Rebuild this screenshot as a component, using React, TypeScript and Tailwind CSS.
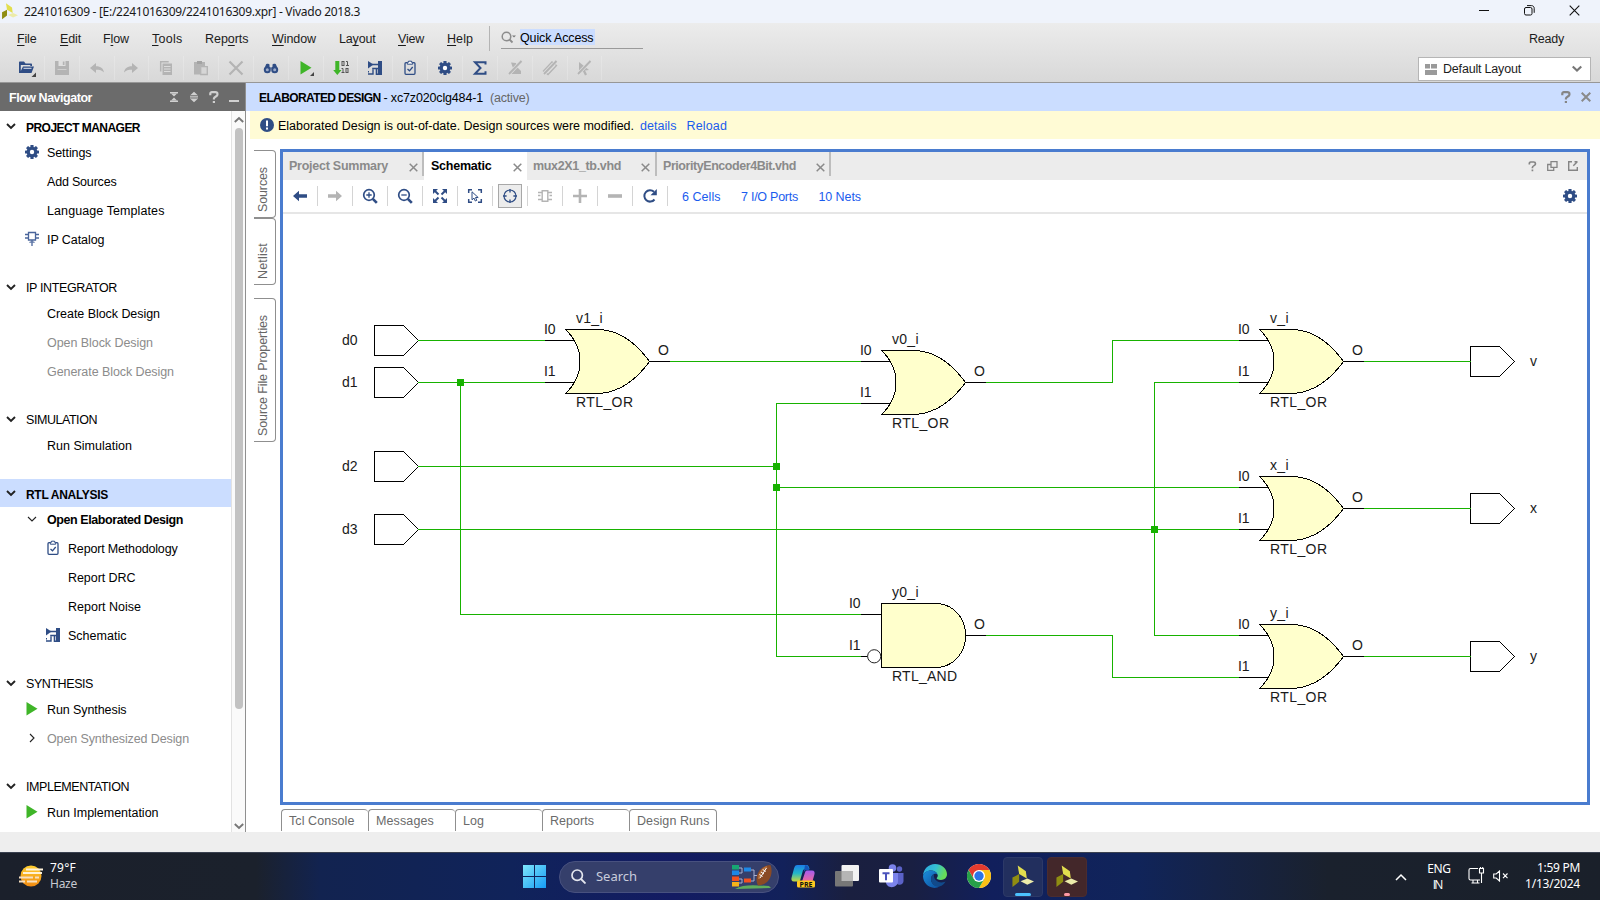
import { useLayoutEffect, useRef, type ReactNode } from "react";

const NAVY = "#2f4d85";
const GRAY = "#b4b4b4";

/** Single-line label whose tracking is spread so the text fills exactly `w` pixels. */
function Label({ w, flush = false, className = "", children }: { w: number; flush?: boolean; className?: string; children: ReactNode }) {
  const ref = useRef<HTMLSpanElement>(null);
  useLayoutEffect(() => {
    const el = ref.current;
    if (!el) return;
    el.style.letterSpacing = "0px";
    const box = el.getBoundingClientRect();
    const natural = Math.max(box.width, box.height);
    const count = (el.textContent ?? "").length;
    el.style.letterSpacing = `${(w - natural) / count}px`;
  }, [w]);
  return (
    <span className={"inline-block shrink-0 whitespace-pre " + (flush ? "" : "pt-0.5 ") + className} style={{ width: w }}>
      <span ref={ref} className="inline-block">{children}</span>
    </span>
  );
}

function Svg({ s = 16, w, h, className = "", children }: { s?: number; w?: number; h?: number; className?: string; children: ReactNode }) {
  return (
    <svg width={w ?? s} height={h ?? s} viewBox={`0 0 ${w ?? s} ${h ?? s}`} fill="none" className={"block shrink-0 " + className}>
      {children}
    </svg>
  );
}

/* ---------- icons ---------- */
const Gear = () => (
  <Svg>
    <g fill={NAVY}>
      <circle cx="8" cy="8" r="5.3" />
      {[0, 45, 90, 135].map((a) => (
        <rect key={a} x="6.4" y="1" width="3.2" height="14" rx=".6" transform={`rotate(${a} 8 8)`} />
      ))}
    </g>
    <circle cx="8" cy="8" r="2.2" fill="#fff" />
  </Svg>
);
const Chip = () => (
  <Svg>
    <path d="M4.500 1.500h7v7.500h-7zM1 3.500h3.500M1 7h3.500M11.500 3.500H15M11.500 7H15M8 9v6M5.500 11.500l2.500-1 2.500 1" stroke="#4a659b" strokeWidth="1.300" />
  </Svg>
);
const Clipboard = () => (
  <Svg>
    <rect x="3" y="2.700" width="10" height="11.600" rx="1" stroke={NAVY} strokeWidth="1.300" />
    <path d="M6.500 1.200h3v1h1.200v2H5.300v-2h1.200z" fill="#fff" stroke={NAVY} strokeWidth="1" />
    <path d="M5.500 9l2 1.800 3.200-3.800" stroke={NAVY} strokeWidth="1.300" />
  </Svg>
);
const SchematicIcon = () => (
  <Svg>
    <path d="M1 1l5.500 3.500L1 8.500z" fill={NAVY} />
    <path d="M5 4.500h6M1 14H6V9.500" stroke={NAVY} strokeWidth="1.400" />
    <path d="M6 9.500v-1h5M9.500 8.500V14.300H11" stroke={NAVY} strokeWidth="1.600" />
    <path d="M11 1h4v14h-4z" fill={NAVY} />
    <path d="M1.500 11v1.500" stroke={NAVY} strokeWidth="1" />
  </Svg>
);
const Play = ({ menu = false }: { menu?: boolean }) => (
  <Svg>
    <path d="M2.500 1L13.500 7.800l-11 6.800z" fill="#3fb528" />
    {menu && <path d="M16 16v-4l-4 4z" fill="#444" />}
  </Svg>
);
const Chevron = ({ thin = false, right = false }: { thin?: boolean; right?: boolean }) => (
  <Svg w={10} h={10}>
    <path d={right ? "M3 1l4 4-4 4" : "M1 3l4 4 4-4"} stroke="#222" strokeWidth={thin ? 1.100 : 1.900} />
  </Svg>
);
const OpenFolder = () => (
  <Svg w={18} h={18}>
    <path d="M1 14V3.500c0-.6.4-1 1-1h4l1.500 2H13c.6 0 1 .4 1 1V7h-1.700V6H2.800v6L5 7.500h11L13.500 14z" fill={NAVY} fillRule="evenodd" />
    <path d="M5.500 9.300h8" stroke="#dfe3ea" strokeWidth="1" />
    <path d="M18 18v-4.500L13.500 18z" fill="#444" />
  </Svg>
);
const Save = () => (
  <Svg>
    <path d="M1 1h14v14H1z" fill={GRAY} />
    <path d="M4.500 1h7v5h-7z" fill="#e0e0e0" />
    <path d="M8.800 1.500h1.700v3.500H8.800z" fill={GRAY} />
    <path d="M3.500 9.500h9" stroke="#cfcfcf" />
  </Svg>
);
const Undo = ({ flip = false }: { flip?: boolean }) => (
  <Svg className={flip ? "-scale-x-100" : ""}>
    <path d="M1 8l6-5v3.200c5 0 7.500 2.300 8 6.300-1.800-2.300-4.300-2.800-8-2.800V13z" fill={GRAY} />
  </Svg>
);
const Copy = () => (
  <Svg>
    <path d="M2.700 11.500V1.700h8" stroke={GRAY} strokeWidth="1.500" />
    <path d="M4.500 3.500H14V15H4.500z" fill={GRAY} />
    <path d="M6 6.500h6.500M6 9h6.500M6 11.500h6.500" stroke="#dcdcdc" />
  </Svg>
);
const Paste = () => (
  <Svg>
    <path d="M1 2h11v4H7v8.500H1z" fill={GRAY} />
    <path d="M4 1h5v3H4z" fill="#a3a3a3" />
    <path d="M7.700 6.700h6.600v7.800H7.700z" fill="#d6d6d6" stroke={GRAY} strokeWidth="1.300" />
  </Svg>
);
const Delete = () => (
  <Svg>
    <path d="M1.500 1.500l13 13M14.500 1.500l-13 13" stroke={GRAY} strokeWidth="2.200" />
  </Svg>
);
const Binoculars = () => (
  <Svg>
    <path d="M3 4.500c0-1 3-1 3.500 0v3h3v-3c.5-1 3.500-1 3.500 0l1.500 4h-13z" fill={NAVY} />
    <circle cx="4.300" cy="9.700" r="3.500" fill={NAVY} />
    <circle cx="11.700" cy="9.700" r="3.500" fill={NAVY} />
    <circle cx="4.300" cy="9.700" r="1.500" fill="#9eacc9" />
    <circle cx="11.700" cy="9.700" r="1.500" fill="#9eacc9" />
  </Svg>
);
const Bitstream = () => (
  <Svg w={16} h={16}>
    <path d="M2.300 1h4v9h2.200L4.300 15 .2 10h2.100z" fill="#3fb528" />
    <g stroke="#555" strokeWidth="1">
      <rect x="9" y="1.500" width="2" height="4" />
      <path d="M13 1.500h1.500v4M13 5.500h3M8.500 8.500h1.500v4M8.500 12.500h3" />
      <rect x="13" y="8.500" width="2" height="4" />
    </g>
  </Svg>
);
const Sigma = () => (
  <Svg>
    <path d="M13.500 4.500V2.200H3L8.500 8 3 13.800h10.500v-2.500" stroke={NAVY} strokeWidth="2" />
  </Svg>
);
const Disabled = ({ kind }: { kind: 0 | 1 | 2 }) => (
  <Svg>
    {kind === 0 && <path d="M4 2.500l5 .5 1 4 4 4v3H2v-2l4-4z" fill={GRAY} />}
    {kind === 1 && <path d="M1.500 11l8.500-9 4.500 3.500-8.500 9zM4 11.500l7-7.500" stroke={GRAY} strokeWidth="1.300" />}
    {kind === 2 && <path d="M3 2l10 8-4 .5 2 4-2 1-2-4-4 2.500z" fill={GRAY} />}
    <path d="M14.500 1L2 14" stroke="#dedede" strokeWidth="3.400" />
    <path d="M14.500 1L2 14" stroke={GRAY} strokeWidth="1.900" />
  </Svg>
);
const Arrow = ({ right = false }: { right?: boolean }) => (
  <Svg className={right ? "-scale-x-100" : ""}>
    <path d="M1 8l6-5.200v3.400h8v3.600H7v3.400z" fill={right ? GRAY : NAVY} />
  </Svg>
);
const Zoom = ({ plus = false }: { plus?: boolean }) => (
  <Svg>
    <circle cx="7" cy="7" r="5.300" stroke={NAVY} strokeWidth="1.700" />
    <path d="M10.800 10.800l4 4" stroke={NAVY} strokeWidth="2.600" />
    <path d={plus ? "M4.300 7h5.400M7 4.300v5.400" : "M4.300 7h5.400"} stroke={NAVY} strokeWidth="1.300" />
  </Svg>
);
const Fit = () => (
  <Svg>
    {[0, 90, 180, 270].map((a) => (
      <g key={a} transform={`rotate(${a} 8 8)`}>
        <path d="M1 1h5L1 6z" fill={NAVY} />
        <path d="M2.500 2.500l4 4" stroke={NAVY} strokeWidth="2" />
      </g>
    ))}
  </Svg>
);
const SelectArea = () => (
  <Svg>
    <path d="M1.700 5V1.700H5M11 1.700h3.300V5M14.300 11v3.300H11M5 14.300H1.700V11" stroke={NAVY} strokeWidth="1.500" />
    <path d="M5 3.800v8l2-1.700 1.300 2.900 1.500-.7-1.300-2.800h2.700z" stroke={NAVY} strokeWidth="1" fill="#fff" />
  </Svg>
);
const Target = () => (
  <Svg>
    <circle cx="8" cy="8" r="6" stroke={NAVY} strokeWidth="1.200" />
    <path d="M8 1v3.600M8 11.400V15M1 8h3.600M11.400 8H15" stroke={NAVY} strokeWidth="1.400" />
  </Svg>
);
const Cell = () => (
  <Svg>
    <path d="M5.200 2.700h5.600v10.600H5.200z" stroke={GRAY} strokeWidth="1.400" />
    <path d="M1 4.500h4M1 7.500h2.500M1 11.500h4M11 4.500h4M12.500 7.500H15M11 11.500h4" stroke={GRAY} strokeWidth="1.400" />
  </Svg>
);
const Plus = () => (
  <Svg>
    <path d="M8 1v14M1 8h14" stroke={GRAY} strokeWidth="2.600" />
  </Svg>
);
const Minus = () => (
  <Svg>
    <path d="M1 8h14" stroke={GRAY} strokeWidth="3.600" />
  </Svg>
);
const Reload = () => (
  <Svg>
    <path d="M12.500 11.500A5.700 5.700 0 1 1 12 3.800" stroke={NAVY} strokeWidth="2" />
    <path d="M14.800 1v6.300H8.500z" fill={NAVY} />
  </Svg>
);
const CloseX = ({ s = 9, c = "#8a8a8a", sw = 1.500 }: { s?: number; c?: string; sw?: number }) => (
  <Svg s={s}>
    <path d={`M.7 .7L${s - 0.700} ${s - 0.700}M${s - 0.700} .7L.7 ${s - 0.700}`} stroke={c} strokeWidth={sw} />
  </Svg>
);
const Question = ({ c }: { c: string }) => (
  <Svg w={10} h={13}>
    <path d="M1.300 4.200V2.600C1.300 1.600 2 1.200 2.800 1.200h3.600c1 0 2 .5 2 1.600v1c0 1.700-3.500 1.700-3.500 3.900v.8M4.900 10v2" stroke={c} strokeWidth="2.200" />
  </Svg>
);
const VivadoMark = ({ s = 24 }: { s?: number }) => (
  <svg width={s} height={s} viewBox="0 0 24 24" className="block shrink-0">
    <path d="M7 0.500l8.500 6L16.500 14 8.500 9.500z" fill="#e2de4e" />
    <path d="M1.500 13L8.500 9.500v8L1.500 23z" fill="#8f8d12" />
    <path d="M10 17l7-2.800 7 3-7 3.300z" fill="#ecebaa" />
  </svg>
);

/* ---------- title, menu and tool bars ---------- */
function TitleBar() {
  return (
    <div className="flex h-[23px] items-center bg-[#eff3fb] pl-px pr-5 font-['Noto_Sans',sans-serif] text-[12px] text-[#191919]">
      <VivadoMark s={17} />
      <Label flush w={336} className="ml-[6px] leading-[23px]">2241016309 - [E:/2241016309/2241016309.xpr] - Vivado 2018.3</Label>
      <div className="ml-auto flex items-center pb-[3px]">
        <Svg w={10} h={11}><path d="M0 5.500h10" stroke="#111" /></Svg>
        <Svg w={11} h={11} className="ml-[35px]">
          <rect x=".5" y="2.500" width="7.500" height="7.500" rx="1.500" stroke="#111" />
          <path d="M3 .6h4.500c1.500 0 2.700 1.100 2.700 2.700v4.500" stroke="#111" />
        </Svg>
        <div className="ml-[34px]"><CloseX s={11} c="#111" sw={1.100} /></div>
      </div>
    </div>
  );
}

const MENUS: [string, string, string, number, number][] = [
  ["", "F", "ile", 19.500, 43],
  ["", "E", "dit", 21, 43],
  ["F", "l", "ow", 26, 49],
  ["", "T", "ools", 30.500, 53],
  ["Rep", "o", "rts", 43.500, 67],
  ["", "W", "indow", 44, 67],
  ["La", "y", "out", 36.500, 59],
  ["", "V", "iew", 26, 49],
  ["", "H", "elp", 26, 42],
];

function MenuBar() {
  return (
    <div className="flex h-[33px] items-start text-[12.500px] text-[#1c1c1c]">
      <div className="flex h-[31px] items-center pl-[17px]">
        {MENUS.map(([a, u, b, w, step]) => (
          <div key={u + b} className="shrink-0" style={{ width: step }}>
            <Label w={w}>{a}<span className="underline underline-offset-2">{u}</span>{b}</Label>
          </div>
        ))}
      </div>
      <div className="mt-[3px] h-[25px] w-px bg-[#b4b4b4]" />
      <div className="ml-[11px] flex h-[26px] w-[142px] items-center border-b border-[#9a9a9a] pt-[3px]">
        <Svg w={15} h={13}>
          <circle cx="5.500" cy="5.500" r="4.300" stroke="#8c8c8c" strokeWidth="1.500" />
          <path d="M8.500 8.500l3 3" stroke="#8c8c8c" strokeWidth="1.800" />
          <path d="M11 4.500h4l-2 2z" fill="#777" />
        </Svg>
        <div className="ml-1 flex h-4 w-[75px] items-center bg-[#cbddff] text-black"><Label w={73.500}>Quick Access</Label></div>
      </div>
      <div className="ml-auto flex h-[31px] items-center pr-9"><Label w={35}>Ready</Label></div>
    </div>
  );
}

const MAIN_TOOLS: ReactNode[] = [
  <OpenFolder />, <Save />, <Undo />, <Undo flip />, <Copy />, <Paste />, <Delete />, <Binoculars />, <Play menu />,
  <Bitstream />, <SchematicIcon />, <Clipboard />, <Gear />, <Sigma />, <Disabled kind={0} />, <Disabled kind={1} />, <Disabled kind={2} />,
];

function ToolBar() {
  return (
    <div className="flex h-[26px] items-center justify-between pl-[10px] pr-[9px]">
      <div className="flex pb-0.5">
        {MAIN_TOOLS.map((icon, i) => (
          <div key={i} className="flex h-6 w-[34.850px] items-center justify-center border-r border-white/20">{icon}</div>
        ))}
      </div>
      <div className="flex h-6 w-[173px] items-center border border-[#b5b5b5] bg-white pl-1.5 pr-2 text-[12.500px] text-[#1c1c1c]">
        <Svg w={12} h={11}>
          <path d="M0 0h5v4.500H0zM6 0h6v4.500H6zM0 6h12v5H0z" fill="#9a9a9a" />
        </Svg>
        <Label flush w={78} className="ml-1.5">Default Layout</Label>
        <Svg w={10} h={8} className="ml-auto"><path d="M.7 1.500L5 5.500l4.300-4" stroke="#777" strokeWidth="2.200" /></Svg>
      </div>
    </div>
  );
}

/* ---------- flow navigator ---------- */
type Item = { text: string; w: number; icon?: ReactNode; dim?: boolean; bold?: boolean; deep?: boolean };
type Section = { title: string; w: number; active?: boolean; bold?: boolean; items: Item[] };

const SECTIONS: Section[] = [
  {
    title: "PROJECT MANAGER", w: 114, bold: true,
    items: [
      { text: "Settings", w: 44.500, icon: <Gear /> },
      { text: "Add Sources", w: 69.500 },
      { text: "Language Templates", w: 117.500 },
      { text: "IP Catalog", w: 57.500, icon: <Chip /> },
    ],
  },
  {
    title: "IP INTEGRATOR", w: 91,
    items: [
      { text: "Create Block Design", w: 113 },
      { text: "Open Block Design", w: 106, dim: true },
      { text: "Generate Block Design", w: 127, dim: true },
    ],
  },
  { title: "SIMULATION", w: 71, items: [{ text: "Run Simulation", w: 85 }] },
  {
    title: "RTL ANALYSIS", w: 82, active: true, bold: true,
    items: [
      { text: "Open Elaborated Design", w: 136, bold: true, icon: <Chevron thin /> },
      { text: "Report Methodology", w: 109.500, icon: <Clipboard />, deep: true },
      { text: "Report DRC", w: 67.500, deep: true },
      { text: "Report Noise", w: 73, deep: true },
      { text: "Schematic", w: 58.500, icon: <SchematicIcon />, deep: true },
    ],
  },
  {
    title: "SYNTHESIS", w: 67,
    items: [
      { text: "Run Synthesis", w: 79.500, icon: <Play /> },
      { text: "Open Synthesized Design", w: 142, dim: true, icon: <Chevron thin right /> },
    ],
  },
  { title: "IMPLEMENTATION", w: 103, items: [{ text: "Run Implementation", w: 111.500, icon: <Play /> }] },
];

function FlowNavigator() {
  return (
    <aside className="flex w-[246px] shrink-0 flex-col border-r border-[#8f8f8f] bg-white">
      <div className="flex h-7 shrink-0 items-center bg-[#6b6b6b] pl-[9px] text-[12.500px] font-bold text-white">
        <Label w={83}>Flow Navigator</Label>
        <div className="ml-auto flex items-center gap-[10px] pr-1.5">
          <Svg w={10} h={12}><path d="M1 1.800h8M1 10.200h8" stroke="#d0d0d0" strokeWidth="1.400" /><path d="M2 2.500h6L5 5.500zM2 9.500h6L5 6.500z" fill="#d0d0d0" /></Svg>
          <Svg w={10} h={12}><path d="M1.500 4L5 .8 8.500 4zM1.500 8L5 11.200 8.500 8z" fill="#d0d0d0" /><path d="M1 5.200h8M1 7h8" stroke="#d0d0d0" strokeWidth="1.100" /></Svg>
          <Question c="#d0d0d0" />
          <Svg w={10} h={12}><path d="M0 10h10" stroke="#d0d0d0" strokeWidth="2" /></Svg>
        </div>
      </div>
      <div className="flex min-h-0 flex-1">
        <div className="min-w-0 flex-1 overflow-hidden pt-px text-[12.500px]">
          {SECTIONS.map((s) => (
            <section key={s.title} className="mb-[19px]">
              <div className={"flex h-7 items-center pl-[6px] " + (s.active ? "bg-[#cbddff]" : "")}>
                <Chevron />
                <Label w={s.w} className={"ml-[10px] pt-[3px] " + (s.bold ? "text-[12px] font-bold" : "")}>{s.title}</Label>
              </div>
              <div className="-mt-0.5">
                {s.items.map((it) => (
                  <div key={it.text} className={"flex h-[29px] items-center " + (it.deep ? "pl-[46px] " : "pl-[25px] ") + (it.dim ? "text-[#8c8c8c] " : "text-black ") + (it.bold ? "font-bold" : "")}>
                    <div className="-ml-px mr-px flex w-4 justify-center pb-px">{it.icon}</div>
                    <Label w={it.w} className="ml-1.5">{it.text}</Label>
                  </div>
                ))}
              </div>
            </section>
          ))}
        </div>
        <div className="flex w-[14px] flex-col items-center border-l border-[#e2e2e2] bg-[#fafafa] py-[5px]">
          <Svg w={10} h={7}><path d="M.8 6L5 2l4.200 4" stroke="#777" strokeWidth="1.900" /></Svg>
          <div className="mt-[5px] h-[581px] w-2 rounded bg-[#c2c2c2]" />
          <Svg w={10} h={7} className="mt-auto -mb-[3px]"><path d="M.8 1L5 5l4.200-4" stroke="#777" strokeWidth="1.900" /></Svg>
        </div>
      </div>
    </aside>
  );
}

/* ---------- schematic ---------- */
function Txt({ x, y, w, children }: { x: number; y: number; w: number; children: string }) {
  return (
    <text x={x} y={y} textLength={w} className="fill-[#1a1a1a] font-['Liberation_Sans',Arial,sans-serif] text-[14px]">
      {children}
    </text>
  );
}

function PortShape({ x, y }: { x: number; y: number }) {
  return <path d={`M${x + 0.500} ${y - 14.500}h29l15 15-15 15h-29z`} fill="#fff" stroke="#000" />;
}

function OrGate({ x, y, name, nameW }: { x: number; y: number; name: string; nameW: number }) {
  const c = y + 0.500;
  return (
    <g>
      <path d={`M${x - 20} ${c - 21}h31M${x - 20} ${c + 21}h31M${x + 84} ${c}h21`} stroke="#000" />
      <path
        d={`M${x + 0.500} ${c - 32}H${x + 36}C${x + 58} ${c - 30} ${x + 73} ${c - 16} ${x + 84.500} ${c}C${x + 73} ${c + 16} ${x + 58} ${c + 30} ${x + 35} ${c + 32}H${x + 0.500}C${x + 11} ${c + 22} ${x + 15} ${c + 12} ${x + 15} ${c}C${x + 15} ${c - 12} ${x + 11} ${c - 22} ${x + 0.500} ${c - 32}z`}
        fill="#ffffcc"
        stroke="#000"
      />
      <Txt x={x + 11} y={y - 38} w={nameW}>{name}</Txt>
      <Txt x={x + 11} y={y + 46} w={57}>RTL_OR</Txt>
      <Txt x={x - 21} y={y - 27} w={11.500}>I0</Txt>
      <Txt x={x - 21} y={y + 15} w={11.500}>I1</Txt>
      <Txt x={x + 93} y={y - 6} w={11}>O</Txt>
    </g>
  );
}

function Schematic() {
  const ins: [string, number][] = [["d0", 340], ["d1", 382], ["d2", 466], ["d3", 529]];
  const outs: [string, number][] = [["v", 361], ["x", 508], ["y", 656]];
  const dots: [number, number][] = [[460, 382], [776, 466], [776, 487], [1154, 529]];
  return (
    <svg width="1304" height="588" viewBox="283 214 1304 588" fill="none" shapeRendering="crispEdges" className="block">
      {ins.map(([n, y]) => (
        <g key={n}>
          <PortShape x={374} y={y} />
          <Txt x={342} y={y + 5} w={15.500}>{n}</Txt>
        </g>
      ))}
      {outs.map(([n, y]) => (
        <g key={n}>
          <PortShape x={1470} y={y} />
          <Txt x={1530} y={y + 5} w={7}>{n}</Txt>
        </g>
      ))}
      <path
        d="M418 340.500H545M418 382.500H545M460.500 382V614.500H861M670 361.500H861M418 466.500H776.500M861 403.500H776.500V656.500H861M776 487.500H1239M418 529.500H1239M1239 382.500H1154.500V635.500H1239M986 382.500H1112.500V340.500H1239M986 635.500H1112.500V677.500H1239M1364 361.500H1471M1364 508.500H1471M1364 656.500H1471"
        stroke="#17b200"
      />
      {dots.map(([x, y]) => (
        <rect key={`${x}-${y}`} x={x - 3} y={y - 3} width="7" height="7" fill="#17b200" />
      ))}
      <OrGate x={565} y={361} name="v1_i" nameW={26.500} />
      <OrGate x={881} y={382} name="v0_i" nameW={26.500} />
      <OrGate x={1259} y={361} name="v_i" nameW={18.500} />
      <OrGate x={1259} y={508} name="x_i" nameW={18.500} />
      <OrGate x={1259} y={656} name="y_i" nameW={18.500} />
      <path d="M861 614.500h21M861 656.500h7M965 635.500h21" stroke="#000" />
      <path d="M881.500 603.500H938C954 605 965.500 618 965.500 635.500C965.500 653 954 666 938 667.500H881.500z" fill="#ffffcc" stroke="#000" />
      <circle cx="874.200" cy="656.300" r="6.600" fill="#fff" stroke="#222" shapeRendering="geometricPrecision" />
      <Txt x={892} y={597} w={26.500}>y0_i</Txt>
      <Txt x={892} y={681} w={65}>RTL_AND</Txt>
      <Txt x={849} y={608} w={11.500}>I0</Txt>
      <Txt x={849} y={650} w={11.500}>I1</Txt>
      <Txt x={974} y={629} w={11}>O</Txt>
    </svg>
  );
}

const VIEW_TOOLS: ReactNode[] = [
  <Arrow />, <Arrow right />, <Zoom plus />, <Zoom />, <Fit />, <SelectArea />, <Target />, <Cell />, <Plus />, <Minus />, <Reload />,
];

function EditorPane() {
  return (
    <div className="flex h-[656px] w-[1310px] flex-col border-[3px] border-[#4a7ccf] bg-white">
      <div className="flex h-7 shrink-0 items-center bg-[#ececec] pr-[13px] text-[12.500px] font-bold text-[#8a8a8a]">
        <div className="flex h-full w-[141px] items-center pl-1.5 pr-[5px]">
          <Label flush w={99}>Project Summary</Label>
          <div className="ml-auto mt-0.5"><CloseX /></div>
          <div className="-mr-[5px] ml-1 mb-1 h-6 w-0.5 bg-[#bdbdbd]" />
        </div>
        <div className="flex h-full w-[103px] items-center bg-white pl-[7px] text-black">
          <Label flush w={60.500}>Schematic</Label>
          <div className="ml-auto mr-[5px] mt-0.5"><CloseX /></div>
        </div>
        <div className="flex h-full w-[130px] items-center pl-1.5">
          <Label flush w={88}>mux2X1_tb.vhd</Label>
          <div className="ml-auto mt-0.5"><CloseX /></div>
          <div className="ml-[5px] mb-1 h-6 w-0.5 bg-[#bdbdbd]" />
        </div>
        <div className="flex h-full w-[174px] items-center pl-1.5">
          <Label flush w={133}>PriorityEncoder4Bit.vhd</Label>
          <div className="ml-auto mt-0.5"><CloseX /></div>
          <div className="ml-1 mb-1 h-6 w-0.5 bg-[#bdbdbd]" />
        </div>
        <div className="-mr-[4px] ml-auto flex items-center gap-2.5">
          <svg width="9" height="11" viewBox="0 0 10 13" className="block" fill="none"><path d="M1.300 4.200V2.600C1.300 1.600 2 1.200 2.800 1.200h3.600c1 0 2 .5 2 1.600v1c0 1.700-3.500 1.700-3.500 3.900v.8M4.900 10v2" stroke="#858585" strokeWidth="2" /></svg>
          <Svg w={11} h={10}><path d="M4 .7h6v5.600H4zM4 3.500H.7v5.800h6V6.500" stroke="#858585" strokeWidth="1.300" /></Svg>
          <Svg w={10} h={10}><path d="M4 .7H.7v8.600h8.600V6M6.500 .8h3M9.300 .7l-4 4" stroke="#858585" strokeWidth="1.400" /></Svg>
        </div>
      </div>
      <div className="flex h-[34px] shrink-0 items-center border-b-2 border-[#e6e6e6] pr-[9px]">
        {VIEW_TOOLS.map((icon, i) => (
          <div key={i} className="flex h-5 w-[35px] items-center justify-center border-r border-[#d4d4d4]">
            {i === 6 ? <div className="flex h-6 w-6 shrink-0 items-center justify-center border border-[#a8a8a8] bg-[#ececec]">{icon}</div> : icon}
          </div>
        ))}
        <div className="flex items-center gap-[20.500px] pl-3.5 text-[12.500px] text-[#1a5cee]">
          <Label w={38.500}>6 Cells</Label>
          <Label w={57}>7 I/O Ports</Label>
          <Label w={42.500}>10 Nets</Label>
        </div>
        <div className="ml-auto"><Gear /></div>
      </div>
      <Schematic />
    </div>
  );
}

function SideTab({ text, w, className }: { text: string; w: number; className: string }) {
  return (
    <div className={"flex w-[22px] shrink-0 items-end justify-center rounded-r border border-l-0 border-[#8f8f8f] pr-1 text-[12.500px] text-[#666] " + className}>
      <div className="flex w-4 items-end" style={{ height: w }}>
        <Label flush w={w} className="h-4 origin-top-left translate-y-full -rotate-90 leading-4">{text}</Label>
      </div>
    </div>
  );
}

const BOTTOM_TABS: [string, number][] = [["Tcl Console", 65.500], ["Messages", 58], ["Log", 21], ["Reports", 44], ["Design Runs", 72.500]];

function Workspace() {
  return (
    <main className="flex min-w-0 flex-1 flex-col bg-white">
      <div className="flex h-7 shrink-0 items-center bg-[#cbddff] pl-[13px] pr-[9px] text-[12.500px] text-black">
        <Label w={121.500} className="text-[12px] font-bold">ELABORATED DESIGN</Label>
        <Label w={99.500} className="ml-[3px]">- xc7z020clg484-1</Label>
        <Label w={39.500} className="ml-[7px] text-[#666]">(active)</Label>
        <div className="ml-auto flex items-center gap-[10px]">
          <Question c="#858585" />
          <CloseX s={10} sw={2} />
        </div>
      </div>
      <div className="ml-1 flex h-7 shrink-0 items-center bg-[#fffbd5] pl-[10px] text-[12.500px] text-black">
        <Svg s={14}><circle cx="7" cy="7" r="7" fill={NAVY} /><path d="M7 2.500v5.700M7 9.500v2" stroke="#fff" strokeWidth="2" /></Svg>
        <Label w={356} className="ml-1">Elaborated Design is out-of-date. Design sources were modified.</Label>
        <Label w={36.500} className="ml-1.5 text-[#1a5cee]">details</Label>
        <Label w={40.500} className="ml-2.5 text-[#1a5cee]">Reload</Label>
      </div>
      <div className="flex pl-2 pt-[10px]">
        <div className="flex w-[26px] flex-col pt-px">
          <SideTab text="Sources" w={45} className="h-[68px] pb-[5px]" />
          <SideTab text="Netlist" w={36} className="h-[67px] pb-[5px]" />
          <SideTab text="Source File Properties" w={121} className="mt-[13px] h-[144px] pb-[5px]" />
        </div>
        <EditorPane />
      </div>
      <div className="ml-[35px] mt-1 flex h-[22px] text-[12.500px] text-[#6a6a6a]">
        {BOTTOM_TABS.map(([t, w], i) => (
          <div key={t} className={"flex shrink-0 items-center rounded-t border-l border-t border-[#8f8f8f] pl-[7px] " + (i === 4 ? "w-[88px] border-r" : "w-[87px]")}>
            <Label w={w}>{t}</Label>
          </div>
        ))}
      </div>
    </main>
  );
}

/* ---------- taskbar ---------- */
const Weather = () => (
  <svg width="26" height="24" viewBox="0 0 26 24" className="block">
    <defs><linearGradient id="sun" x1="0" y1="0" x2="0" y2="1"><stop offset="0" stopColor="#ffcf2e" /><stop offset="1" stopColor="#f08a12" /></linearGradient></defs>
    <circle cx="13" cy="12" r="10.500" fill="url(#sun)" />
    <path d="M8 5.500h17M5 9h19" stroke="#fff2d8" strokeWidth="1.800" />
    <path d="M1 13.500h14M17 13.500h4M1 17.500h6M9 17.500h10" stroke="#f7dfc0" strokeWidth="1.800" />
  </svg>
);
const SearchArt = () => (
  <svg width="42" height="26" viewBox="0 0 42 26" className="block" fill="none">
    <path d="M4 25c8-5 20-4 34-3l2 2z" fill="#5fae5c" />
    <path d="M8 4h3v5H8M8 15h3v4H8M19 6h4v11h-4M23 11.500h5" stroke="#a9b0d0" />
    <rect x="1" y="1" width="7" height="4.500" fill="#17a673" />
    <rect x="1" y="6.500" width="7" height="4.500" fill="#1e88e5" />
    <rect x="1" y="12.500" width="7" height="4.500" fill="#f4511e" />
    <rect x="1" y="18" width="7" height="4.500" fill="#f5b21a" />
    <rect x="13" y="3.500" width="7" height="4" fill="#1e88e5" />
    <rect x="13" y="14.500" width="7" height="4" fill="#f4511e" />
    <path d="M27 21.500C23 14 27 2 39.500 1 43 10 38 21 27 21.500z" fill="#8a4a25" />
    <path d="M28 15c0-5 3-10 8-12" stroke="#b5713f" strokeWidth="2" />
    <path d="M29 14l6.500-10M28.500 10.500l3 2M30 8l3 2M31.700 5.500l3 2" stroke="#fff" strokeWidth="1" />
  </svg>
);
const Copilot = () => (
  <svg width="24" height="24" viewBox="0 0 24 24" className="block">
    <defs>
      <linearGradient id="cpa" x1="0" y1="0" x2="0" y2="1"><stop offset="0" stopColor="#1c7fe8" /><stop offset=".5" stopColor="#22b6c8" /><stop offset="1" stopColor="#c9d83a" /></linearGradient>
      <linearGradient id="cpb" x1="0" y1="0" x2="0" y2="1"><stop offset="0" stopColor="#a45cf0" /><stop offset="1" stopColor="#f0689a" /></linearGradient>
    </defs>
    <path d="M6.500 1h9c2 0 2.500 2 3 4h-4c-2 0-2.500 1-3 3l-2 7c-.5 2-1 2.500-3 2.500H3c-2.500 0-3-2-2.400-4L3 4.500C3.700 2 4.500 1 6.500 1z" fill="url(#cpa)" />
    <path d="M14 1.300c3 0 3.500 2 4.500 5h-4.300l-1.500 2z" fill="#1454b8" />
    <path d="M16 6.500h5c2.500 0 3 2 2.400 4l-2 7H11l3-9c.4-1.300 1-2 2-2z" fill="url(#cpb)" />
    <rect x="6" y="16.500" width="18" height="7" rx="1.500" fill="#ffc91f" />
    <text x="8.500" y="22.500" className="fill-[#111] font-['Open_Sans',sans-serif] text-[7px] font-bold" textLength="13">PRE</text>
  </svg>
);
const TaskView = () => (
  <svg width="24" height="24" viewBox="0 0 24 24" className="block">
    <rect x="6.500" y="1" width="17.500" height="16" rx="1" fill="#f2f2f2" />
    <rect x="0" y="7" width="18" height="15.500" rx="1" fill="#777" />
    <path d="M6.500 7H18v10H6.500z" fill="#b5b5b5" />
  </svg>
);
const Teams = () => (
  <svg width="25" height="24" viewBox="0 0 25 24" className="block">
    <circle cx="20.500" cy="5" r="2.700" fill="#5b62c8" /><circle cx="13.500" cy="4" r="3.800" fill="#7b83eb" />
    <path d="M17 9h7.500v8c0 4-5 5-7.500 2z" fill="#5b62c8" />
    <path d="M7 9h12v8c0 8-12 8-12 1z" fill="#7b83eb" />
    <rect x="0" y="5" width="14" height="13.500" rx="1" fill="#fff" />
    <path d="M3.500 8.300h7v2H8v6H6v-6H3.500z" fill="#4b53bc" />
  </svg>
);
const Edge = () => (
  <svg width="24" height="24" viewBox="0 0 24 24" className="block">
    <defs>
      <linearGradient id="ega" x1="0" y1="0" x2="1" y2=".3"><stop offset="0" stopColor="#2aa5e0" /><stop offset=".55" stopColor="#35c1d4" /><stop offset="1" stopColor="#66dd58" /></linearGradient>
      <linearGradient id="egb" x1="0" y1="0" x2="1" y2="1"><stop offset="0" stopColor="#1b8fdc" /><stop offset="1" stopColor="#0c4d9c" /></linearGradient>
    </defs>
    <path d="M0 11.500C.5 5 5.500 0 12 0s12 4.500 12 10.300c0 3.400-2.700 5.700-6 5.700-3 0-4.500-1.200-4.300-2 1-.8 1.200-2 1-3C14 8 11 6.500 8 6.500c-4 0-7 2.500-8 5z" fill="url(#ega)" />
    <path d="M0 12c.8-3.500 4-5.500 8-5.500 3 0 5.500 1.500 6.500 3.800C12 8.500 8 11 8 15c0 4.500 4 8 9 7-1.500 1.300-3.500 2-5.500 2C5 23.500 0 18.500 0 12z" fill="url(#egb)" />
    <path d="M8 15c0-3 1.500-4.500 3-5-1 4 2.500 8.500 7.500 8.500 2 0 3.500-.7 4.200-1.200C21 20 19 22 17 22.300 12 23.500 8 19.500 8 15z" fill="#114a8b" />
  </svg>
);
const Chrome = () => (
  <svg width="24" height="24" viewBox="0 0 24 24" className="block">
    <circle cx="12" cy="12" r="12" fill="#fff" />
    <path d="M12 6h10.400A12 12 0 0 0 1.600 6l5.200 9z" fill="#e33b2e" />
    <path d="M12 6h10.400A12 12 0 0 1 12 24l5.200-9z" fill="#fbc116" />
    <path d="M6.800 15L1.600 6A12 12 0 0 0 12 24l5.200-9z" fill="#27a048" />
    <circle cx="12" cy="12" r="6" fill="#fff" /><circle cx="12" cy="12" r="4.700" fill="#2b74e8" />
  </svg>
);

function Taskbar() {
  return (
    <footer className="flex h-12 shrink-0 items-center border-t border-[#3a4150] bg-[linear-gradient(90deg,#1b202b_0%,#1b212c_16%,#122350_20%,#10235a_32%,#131b62_42%,#12215a_49%,#1a1f3f_53%,#191f42_57%,#111f5c_62%,#10245a_71%,#152347_76%,#1a212d_83%,#1a202a_100%)] font-['Noto_Sans','Open_Sans',sans-serif] text-[12px] text-white">
      <div className="flex w-[523px] items-center pb-0.5 pl-[18px]">
        <Weather />
        <div className="ml-1.5 flex flex-col">
          <Label flush w={26} className="h-4 leading-4">79°F</Label>
          <Label flush w={27} className="h-4 leading-4 text-[#c6c9d0]">Haze</Label>
        </div>
      </div>
      <Svg w={23} h={23}>
        <defs><linearGradient id="win" x1="0" y1="0" x2="1" y2="1"><stop offset="0" stopColor="#7ee6fb" /><stop offset="1" stopColor="#169cf5" /></linearGradient></defs>
        <path d="M0 0h11v11H0zM12 0h11v11H12zM0 12h11v11H0zM12 12h11v11H12z" fill="url(#win)" />
      </Svg>
      <div className="ml-[13px] flex h-8 w-[220px] items-center rounded-full border border-[#48517f] bg-[#353f6b] pl-[11px] pr-[5px]">
        <Svg w={15} h={15}><circle cx="6.200" cy="6.200" r="5.200" stroke="#e4e6ee" strokeWidth="1.700" /><path d="M10 10l4.500 4.500" stroke="#e4e6ee" strokeWidth="1.800" /></Svg>
        <Label flush w={41} className="ml-2.5 text-[13px] text-[#c9cddc]">Search</Label>
        <div className="ml-auto"><SearchArt /></div>
      </div>
      <div className="ml-3 mr-px flex items-center gap-[19.750px] pb-0.5">
        <Copilot /><TaskView /><Teams /><Edge /><Chrome />
      </div>
      <div className="ml-[11px] flex h-10 w-10 flex-col items-center justify-between rounded border border-[#2c3968] bg-[#222f5e] pr-0.5 pt-[7px]">
        <VivadoMark s={23} /><div className="ml-0.5 h-[3px] w-4 rounded-full bg-[#4cc2ff]" />
      </div>
      <div className="ml-1 flex h-10 w-10 flex-col items-center justify-between rounded border border-[#4a2c30] bg-[#43272a] pr-0.5 pt-[7px]">
        <VivadoMark s={23} /><div className="ml-0.5 h-[3px] w-1.5 rounded-full bg-[#ff99a4]" />
      </div>
      <div className="ml-auto flex items-center pr-5">
        <Svg w={12} h={8}><path d="M1 7l5-5 5 5" stroke="#fff" strokeWidth="1.500" /></Svg>
        <div className="ml-[20px] flex w-[24px] flex-col items-center">
          <Label flush w={23.500} className="h-4 leading-4">ENG</Label>
          <Label flush w={12.500} className="h-4 font-['Open_Sans',sans-serif] leading-4">IN</Label>
        </div>
        <Svg w={17} h={17} className="mb-0.5 ml-[17px]">
          <path d="M10 1.500H2.500c-1 0-1.500.5-1.500 1.500v8.500c0 1 .5 1.500 1.500 1.500H12M5 13v3M9.500 13v3M3.500 16h8M11.500 1.500h4v4.500h-4zM13.500 6v10M12.500 0v1.500M14.700 0v1.500" stroke="#fff" strokeWidth="1.100" />
        </Svg>
        <Svg w={16} h={12} className="mb-0.5 ml-2">
          <path d="M.7 4h2.500L6.500 1v10L3.200 8H.7zM10 3.500l4.500 4.700M14.500 3.500L10 8.200" stroke="#fff" strokeWidth="1.100" />
        </Svg>
        <div className="ml-4 flex w-[55px] flex-col items-end pb-0.5">
          <Label flush w={43} className="h-4 leading-4">1:59 PM</Label>
          <Label flush w={55} className="h-4 leading-4">1/13/2024</Label>
        </div>
      </div>
    </footer>
  );
}

export default function App() {
  return (
    <div className="flex h-[900px] w-[1600px] flex-col overflow-hidden bg-[#eee] font-['Liberation_Sans',Arial,sans-serif]">
      <TitleBar />
      <header className="h-[60px] shrink-0 border-b border-[#979797] bg-linear-to-b from-[#ececec] to-[#d8d8d8]">
        <MenuBar />
        <ToolBar />
      </header>
      <div className="flex h-[749px] shrink-0">
        <FlowNavigator />
        <Workspace />
      </div>
      <div className="h-5 shrink-0" />
      <Taskbar />
    </div>
  );
}
